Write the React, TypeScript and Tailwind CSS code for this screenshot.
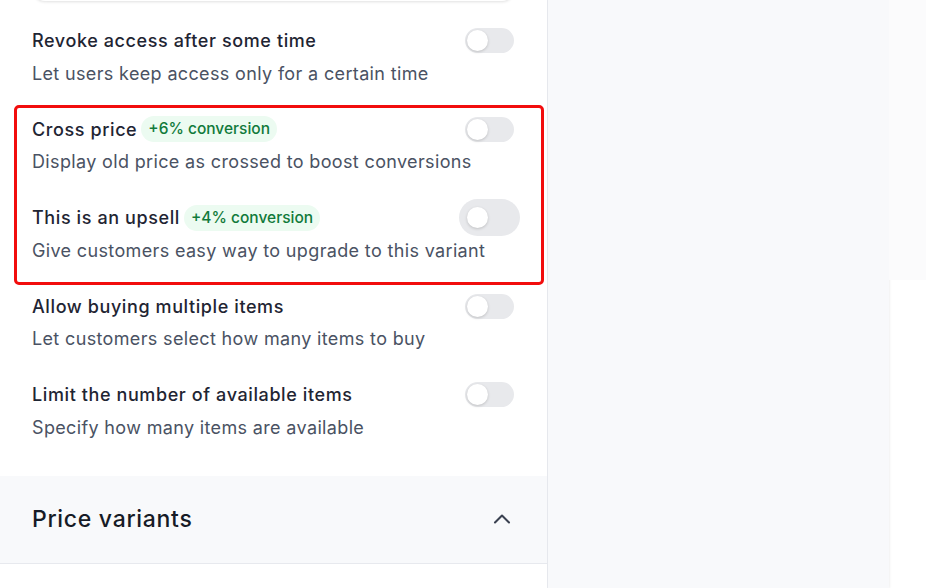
import React from 'react';
import { ChevronUp } from 'lucide-react';

interface OptionRow {
  title: string;
  description: string;
  badge?: string;
  focused?: boolean;
}

const TOP_ROWS: OptionRow[] = [
  { title: 'Revoke access after some time', description: 'Let users keep access only for a certain time' },
];

const HIGHLIGHTED: OptionRow[] = [
  { title: 'Cross price', description: 'Display old price as crossed to boost conversions', badge: '+6% conversion' },
  { title: 'This is an upsell', description: 'Give customers easy way to upgrade to this variant', badge: '+4% conversion', focused: true },
];

const BOTTOM_ROWS: OptionRow[] = [
  { title: 'Allow buying multiple items', description: 'Let customers select how many items to buy' },
  { title: 'Limit the number of available items', description: 'Specify how many items are available' },
];

const Toggle: React.FC<{ focused?: boolean }> = ({ focused }) => (
  <button
    className={
      'relative flex h-[25px] w-[49px] shrink-0 items-center rounded-full bg-[#e8e9ec] px-[2px] ' +
      (focused ? 'ring-[6px] ring-[#e8e9ec]' : '')
    }
  >
    <span className="h-[21px] w-[21px] rounded-full bg-white shadow-[0_1px_3px_rgba(0,0,0,0.18)]" />
  </button>
);

const Row: React.FC<{ row: OptionRow }> = ({ row }) => (
  <div className="flex flex-col gap-[7px] py-[14.75px]">
    <div className="flex h-[26px] items-center justify-between">
      <div className="flex items-center gap-[4px]">
        <span className="text-[18px] font-medium tracking-[0.6px] text-[#1f2533]">{row.title}</span>
        {row.badge && (
          <span className="rounded-full bg-[#ecfbf1] px-[7px] py-[2px] text-[15.5px] font-medium leading-[22px] text-[#117a3b]">
            {row.badge}
          </span>
        )}
      </div>
      <Toggle focused={row.focused} />
    </div>
    <p className="h-[26px] text-[18px] leading-[26px] tracking-[0.35px] text-[#4a5263]">{row.description}</p>
  </div>
);

export default function App() {
  return (
    <div className="flex h-[588px] w-[926px] overflow-hidden bg-white font-['Inter',sans-serif]">
      <div className="flex w-[548px] shrink-0 flex-col border-r border-[#e7e9ee] bg-white">
        <div className="mx-[33px] -mt-[20px] h-[21px] rounded-b-xl bg-white shadow-[0_1px_3px_rgba(0,0,0,0.12)]" />
        <div className="flex flex-col pt-[12px] pl-[32px] pr-[33px]">
          {TOP_ROWS.map((r) => <Row key={r.title} row={r} />)}
          <div className="relative">
            <div className="pointer-events-none absolute top-[3px] -bottom-[6px] -left-[18px] -right-[30px] rounded-[5px] border-[3px] border-[#f20d0d]" />
            {HIGHLIGHTED.map((r) => <Row key={r.title} row={r} />)}
          </div>
          {BOTTOM_ROWS.map((r) => <Row key={r.title} row={r} />)}
        </div>
        <div className="mt-[20px] flex h-[88px] items-center justify-between border-b border-[#e7e9ee] bg-[#f8f9fb] pl-[32px] pr-[31px]">
          <span className="text-[23px] font-medium tracking-[0.7px] text-[#161b26]">Price variants</span>
          <ChevronUp size={28} strokeWidth={1.75} className="text-[#3a4150]" />
        </div>
      </div>
      <div className="w-[341px] shrink-0 bg-[#f8f9fb] shadow-[1px_0_2px_rgba(0,0,0,0.06)]" />
      <div className="flex flex-1 flex-col">
        <div className="h-[280px] bg-[#fbfbfc]" />
      </div>
    </div>
  );
}
